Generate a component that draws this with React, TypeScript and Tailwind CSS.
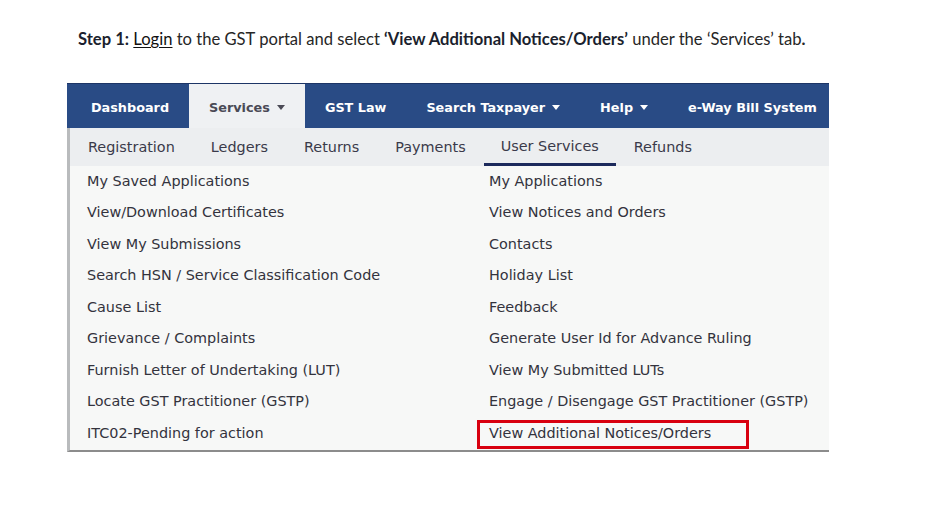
import React from "react";

const navItems = [
  { label: "Dashboard" },
  { label: "Services", caret: true, active: true },
  { label: "GST Law" },
  { label: "Search Taxpayer", caret: true },
  { label: "Help", caret: true },
  { label: "e-Way Bill System" },
];

const subTabs = ["Registration", "Ledgers", "Returns", "Payments", "User Services", "Refunds"];

const leftLinks = [
  "My Saved Applications",
  "View/Download Certificates",
  "View My Submissions",
  "Search HSN / Service Classification Code",
  "Cause List",
  "Grievance / Complaints",
  "Furnish Letter of Undertaking (LUT)",
  "Locate GST Practitioner (GSTP)",
  "ITC02-Pending for action",
];

const rightLinks = [
  "My Applications",
  "View Notices and Orders",
  "Contacts",
  "Holiday List",
  "Feedback",
  "Generate User Id for Advance Ruling",
  "View My Submitted LUTs",
  "Engage / Disengage GST Practitioner (GSTP)",
];

function Caret() {
  return (
    <svg width="8" height="5" viewBox="0 0 8 5" className="ml-[7px] inline-block shrink-0">
      <path d="M0 0h8L4 5z" fill="currentColor" />
    </svg>
  );
}

export default function App() {
  return (
    <div className="w-[940px] h-[529px] bg-white relative overflow-hidden">
      {/* Instruction line */}
      <p
        className="pl-[78px] pt-[29px] text-[16.6px] leading-[20px] text-[#262626]"
        style={{ fontFamily: "Lato, 'Liberation Sans', sans-serif" }}
      >
        <span className="font-bold text-[#1b1f2e]">Step 1:</span>{" "}
        <span className="underline underline-offset-2 text-[#111]">Login</span> to the GST portal and select{" "}
        <span className="font-bold text-[#1b1f2e]">‘View Additional Notices/Orders’</span> under the ‘Services’ tab
        <span className="font-bold">.</span>
      </p>

      {/* Portal screenshot */}
      <div
        className="ml-[67px] mt-[34px] w-[762px] text-[14.4px]"
        style={{ fontFamily: "Verdana, 'DejaVu Sans', sans-serif" }}
      >
        {/* Top nav */}
        <div className="flex h-[45px] bg-[#294b85] border-t border-[#1d3566] pl-[4px] overflow-hidden whitespace-nowrap">
          {navItems.map((item) => (
            <div
              key={item.label}
              className={
                item.active
                  ? "flex shrink-0 items-center px-5 pt-[3px] bg-[#eff1f3] text-[#4a4a55] text-[12.8px] font-bold"
                  : "flex shrink-0 items-center px-5 pt-[3px] text-white text-[12.8px] font-bold"
              }
            >
              {item.label}
              {item.caret && <Caret />}
            </div>
          ))}
        </div>

        <div className="border-l-[3px] border-b-2 border-l-[#b9bbbd] border-b-[#8c8c8c]">
          {/* Sub tabs */}
          <div className="flex h-[38px] bg-[#eceef0] whitespace-nowrap">
            {subTabs.map((tab) => (
              <div
                key={tab}
                className={
                  tab === "User Services"
                    ? "flex items-center px-[17px] pt-[3px] text-[#3a3a4a] border-b-[3px] border-[#1c2a5c]"
                    : "flex items-center px-[18px] pt-[2px] text-[#3a3a4a]"
                }
              >
                {tab}
              </div>
            ))}
          </div>

          {/* Menu links */}
          <div className="grid grid-cols-[402px_1fr] bg-[#f7f8f7] pl-[17px] text-[#33333d] whitespace-nowrap">
            <div className="flex flex-col">
              {leftLinks.map((l) => (
                <div key={l} className="h-[31.5px] flex items-center">
                  {l}
                </div>
              ))}
            </div>
            <div className="flex flex-col">
              {rightLinks.map((l) => (
                <div key={l} className="h-[31.5px] flex items-center">
                  {l}
                </div>
              ))}
              <div className="h-[31.5px] flex items-end">
                <div className="ml-[-12px] mb-[1px] h-[29px] w-[272px] flex items-center pl-[9px] border-[3px] border-[#d8000f]">
                  View Additional Notices/Orders
                </div>
              </div>
            </div>
          </div>
        </div>
      </div>
    </div>
  );
}
